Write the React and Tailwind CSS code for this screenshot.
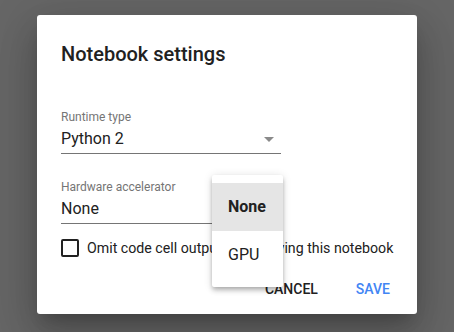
export default function App() {
  return (
    <div className="w-[454px] h-[332px] bg-[#666666] overflow-hidden pt-[15px] pl-[37px] font-['Roboto',sans-serif]">
      <div className="relative w-[380px] h-[299px] bg-white rounded-[3px] flex flex-col px-6 pt-[23px] shadow-[0_11px_15px_-7px_rgba(0,0,0,0.2),0_24px_38px_3px_rgba(0,0,0,0.14),0_9px_46px_8px_rgba(0,0,0,0.12)]">
        <h2 className="text-[20px] leading-8 font-medium text-[#212121]">Notebook settings</h2>

        <div className="mt-[39px] w-[220px]">
          <div className="text-[12px] leading-4 text-[#757575]">Runtime type</div>
          <div className="flex items-center justify-between pt-[2px] pb-[2px] border-b border-[#757575]">
            <span className="text-[16px] leading-6 text-[#212121]">Python 2</span>
            <span className="mr-[7px] w-0 h-0 border-x-[5px] border-x-transparent border-t-[5px] border-t-[#8a8a8a]"></span>
          </div>
        </div>

        <div className="relative mt-[25px] w-[220px]">
          <div className="text-[12px] leading-4 text-[#757575]">Hardware accelerator</div>
          <div className="flex items-center pt-[2px] pb-[2px] border-b border-[#757575]">
            <span className="text-[16px] leading-6 text-[#212121]">None</span>
          </div>
          <div className="absolute left-[151px] top-[-4px] w-[71px] z-10 bg-white rounded-[2px] py-2 shadow-[0_2px_4px_-1px_rgba(0,0,0,0.2),0_4px_5px_0_rgba(0,0,0,0.14),0_1px_10px_0_rgba(0,0,0,0.12)]">
            <div className="h-12 flex items-center px-4 bg-[#e5e5e5] text-[16px] leading-6 font-bold text-[#212121]">None</div>
            <div className="h-12 flex items-center px-4 text-[16px] leading-6 text-[#212121]">GPU</div>
          </div>
        </div>

        <div className="mt-[15px] flex items-center">
          <span className="w-[18px] h-[18px] border-2 border-[#212121] rounded-[2px] shrink-0"></span>
          <span className="ml-[8px] text-[14.2px] leading-[18px] text-[#212121] whitespace-nowrap">Omit code cell output when saving this notebook</span>
        </div>

        <div className="mt-auto -mr-6 pr-[19px] pb-[7px] flex justify-end gap-[22px]">
          <button className="h-9 px-2 text-[14px] font-medium text-[#212121]">CANCEL</button>
          <button className="h-9 px-2 text-[14px] font-medium text-[#4285f4]">SAVE</button>
        </div>
      </div>
    </div>
  );
}
